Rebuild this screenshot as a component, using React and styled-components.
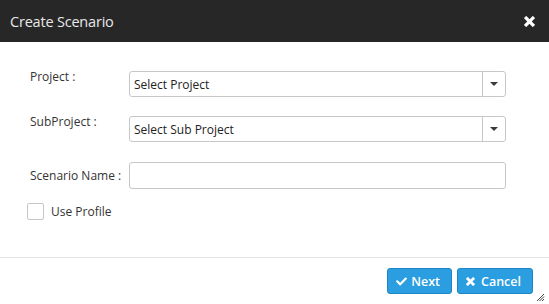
import React from 'react';
import styled, { createGlobalStyle } from 'styled-components';
import { FaCheck } from 'react-icons/fa';

const GlobalStyle = createGlobalStyle`
  html, body {
    margin: 0;
    padding: 0;
    background: #fff;
  }
  body {
    font-family: "Open Sans", "Liberation Sans", sans-serif;
  }
`;

// chunky FontAwesome-4 style "times"
const TimesIcon = ({ size }) => (
  <svg width={size} height={size} viewBox="0 0 10 10">
    <path d="M2 2 L8 8 M8 2 L2 8" stroke="currentColor" strokeWidth="3" strokeLinecap="square" />
  </svg>
);

const App = () => {
  return (
    <Dialog>
      <GlobalStyle />
      <Header>
        <Title>Create Scenario</Title>
        <CloseButton aria-label="close">
          <TimesIcon size={11} />
        </CloseButton>
      </Header>

      <Body>
        <FormRow gap={19}>
          <Label offset={-2}>Project :</Label>
          <SelectBox>
            <SelectText>Select Project</SelectText>
            <ArrowButton>
              <Caret />
            </ArrowButton>
          </SelectBox>
        </FormRow>
        <FormRow gap={20}>
          <Label offset={-2}>SubProject :</Label>
          <SelectBox>
            <SelectText>Select Sub Project</SelectText>
            <ArrowButton>
              <Caret />
            </ArrowButton>
          </SelectBox>
        </FormRow>
        <FormRow gap={14}>
          <Label offset={6}>Scenario Name :</Label>
          <TextInput />
        </FormRow>
        <CheckRow>
          <CheckBox />
          <CheckLabel>Use Profile</CheckLabel>
        </CheckRow>
      </Body>

      <Footer>
        <ActionButton>
          <FaCheck />
          Next
        </ActionButton>
        <ActionButton wide>
          <TimesIcon size={9} />
          Cancel
        </ActionButton>
        <Grip width="9" height="9" viewBox="0 0 9 9">
          <path d="M8 1 L1 8 M8 3.5 L3.5 8 M8 6 L6 8" stroke="#444" strokeWidth="1" />
        </Grip>
      </Footer>
    </Dialog>
  );
};

const Dialog = styled.div`
  position: relative;
  width: 549px;
  height: 304px;
  display: flex;
  flex-direction: column;
  background: #fff;
  overflow: hidden;
`;

const Header = styled.div`
  height: 42px;
  background-color: #272727;
  display: flex;
  align-items: center;
  justify-content: space-between;
  padding: 0 14px 0 10px;
  box-sizing: border-box;
`;

const Title = styled.div`
  color: #e8e8e8;
  font-size: 14.5px;
  letter-spacing: -0.2px;
`;

const CloseButton = styled.span`
  color: #fff;
  display: flex;
  align-items: center;
`;

const Body = styled.div`
  padding: 29px 43px 0 30px;
  height: 216px;
  box-sizing: border-box;
  border-bottom: 1px solid #e5e5e5;
`;

const FormRow = styled.div`
  display: grid;
  grid-template-columns: 99px 1fr;
  align-items: start;
  margin-bottom: ${(p) => p.gap}px;
`;

const Label = styled.label`
  font-size: 12px;
  line-height: 16px;
  color: #333;
  margin-top: ${(p) => p.offset}px;
`;

const SelectBox = styled.div`
  height: 26px;
  border: 1px solid #c5c7cb;
  border-radius: 3px;
  display: flex;
  align-items: center;
  box-sizing: border-box;
`;

const SelectText = styled.span`
  flex: 1;
  padding-left: 4px;
  font-size: 12px;
  color: #222;
`;

const ArrowButton = styled.span`
  width: 23px;
  height: 100%;
  border-left: 1px solid #c5c7cb;
  display: flex;
  align-items: center;
  justify-content: center;
  box-sizing: border-box;
`;

const Caret = styled.span`
  width: 0;
  height: 0;
  border-left: 4px solid transparent;
  border-right: 4px solid transparent;
  border-top: 4px solid #3a3a3a;
`;

const TextInput = styled.input`
  height: 27px;
  border: 1px solid #c5c7cb;
  border-radius: 3px;
  box-sizing: border-box;
  padding: 0 4px;
  font-family: inherit;
  font-size: 12px;
  outline: none;
`;

const CheckRow = styled.div`
  display: flex;
  align-items: center;
  gap: 7px;
  margin-left: -3px;
`;

const CheckBox = styled.span`
  width: 17px;
  height: 17px;
  border: 1px solid #c5c7cb;
  border-radius: 2px;
  box-sizing: border-box;
`;

const CheckLabel = styled.span`
  font-size: 12px;
  color: #333;
`;

const Footer = styled.div`
  flex: 1;
  display: flex;
  justify-content: flex-end;
  align-items: flex-start;
  gap: 5px;
  padding: 10px 16px 0 0;
`;

const ActionButton = styled.button`
  height: 26px;
  display: inline-flex;
  align-items: center;
  gap: ${(p) => (p.wide ? 6 : 4)}px;
  padding: 0 11px 0 ${(p) => (p.wide ? 8 : 8)}px;
  background-color: #2a9ee1;
  border: 1px solid #1d86c6;
  border-radius: 3px;
  color: #fff;
  font-family: inherit;
  font-size: 12.5px;
  font-weight: 600;
  cursor: pointer;

  svg {
    font-size: 11px;
  }
`;

const Grip = styled.svg`
  position: absolute;
  right: 4px;
  bottom: 2px;
`;

export default App;
